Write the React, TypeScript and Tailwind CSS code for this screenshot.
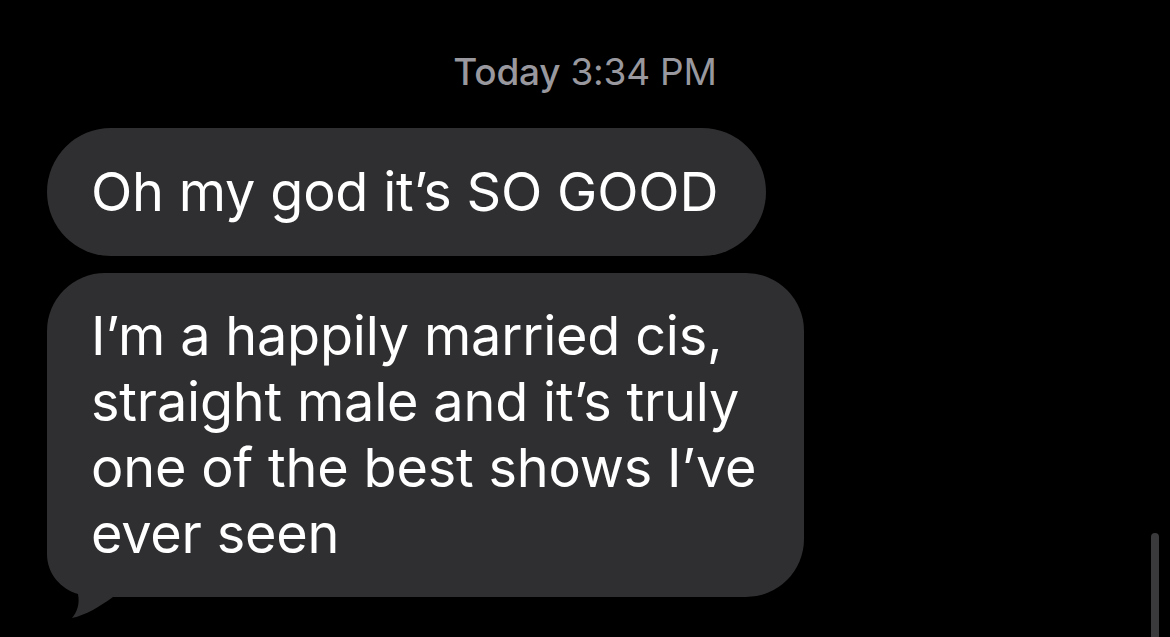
export default function App() {
  const font = { fontFamily: 'Inter, "Noto Sans", "Liberation Sans", sans-serif' };
  return (
    <div className="relative h-[637px] w-full overflow-hidden bg-black" style={font}>
      <div className="flex justify-center pt-[50px] text-[37px] leading-[44px] text-[#98989e] tracking-[-0.2px]">
        <span className="font-medium">Today</span>
        <span className="ml-[10px]">3:34 PM</span>
      </div>
      <div className="flex flex-col items-start gap-[17px] pl-[47px] pt-[34px] text-white text-[54px] leading-[66px] tracking-[-0.2px]">
        <div className="rounded-[64px] bg-[#2f2f31] pl-[44px] pr-[48px] py-[31px]">Oh my god it’s SO GOOD</div>
        <div className="relative w-[757px] rounded-[58px] bg-[#2f2f31] pl-[44px] pr-[40px] py-[30px]">
          <svg className="absolute left-0 bottom-[-22px]" width="70" height="80" viewBox="0 0 70 80">
            <path d="M0 0 L0 15 C0 35 14 50 31 55 C33 65 30 73 25 79 C39 76 52 68 66 58 L66 0 Z" fill="#2f2f31" />
          </svg>
          <div className="relative">
            <div>I’m a happily married cis,</div>
            <div>straight male and it’s truly</div>
            <div>one of the best shows I’ve</div>
            <div>ever seen</div>
          </div>
        </div>
      </div>
      <div className="absolute left-[1151px] top-[533px] h-[120px] w-[8px] rounded-full bg-[#3a3a3c]" />
    </div>
  );
}
